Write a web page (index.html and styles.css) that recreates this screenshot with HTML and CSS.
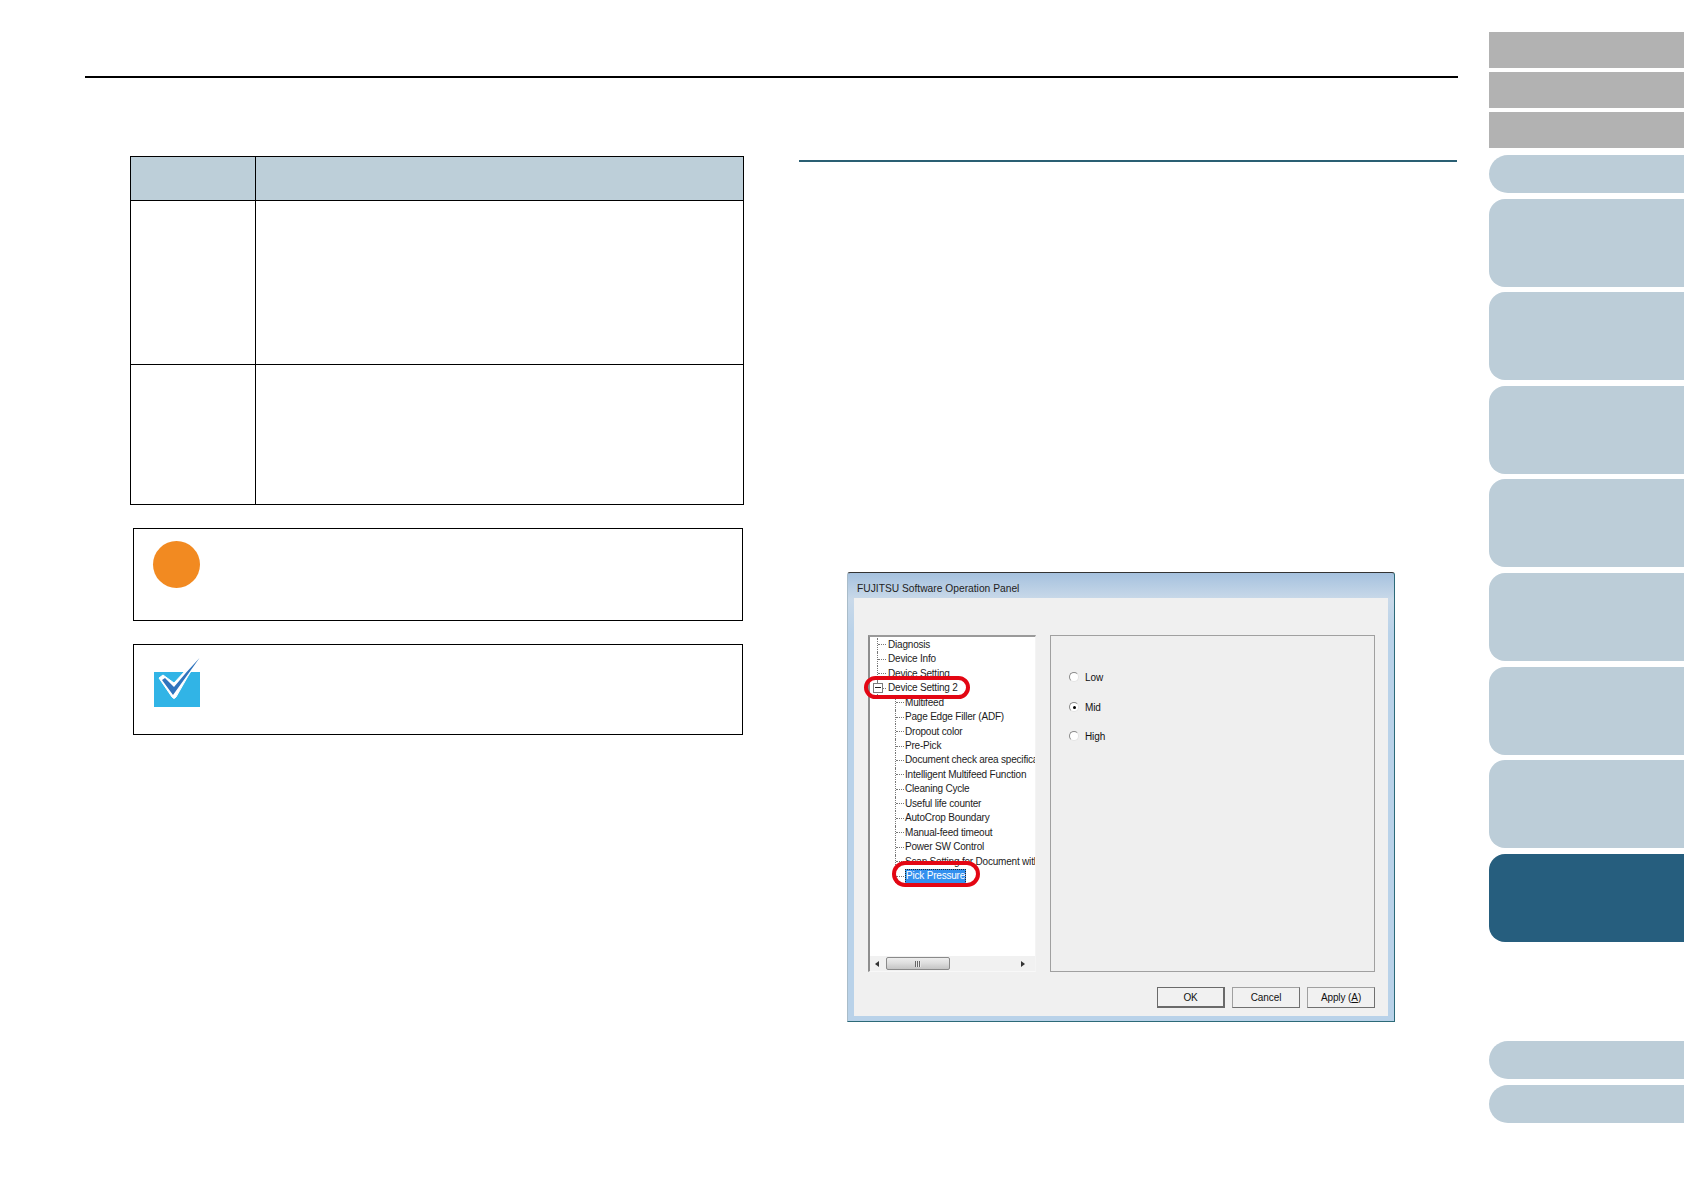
FILE: index.html
```html
<!DOCTYPE html>
<html lang="en">
<head>
<meta charset="utf-8">
<title>Pick Pressure</title>
<link rel="stylesheet" href="styles.css">
</head>
<body>
<div class="page">
  <main class="main">
    <div class="columns">
      <section class="left">
        <table class="spec">
          <thead><tr class="r-head"><th class="c1"></th><th></th></tr></thead>
          <tbody>
            <tr class="r-one"><td></td><td></td></tr>
            <tr class="r-two"><td></td><td></td></tr>
          </tbody>
        </table>
        <div class="note note-a"><span class="dot"></span></div>
        <div class="note note-b">
          <svg class="check" width="48" height="52" viewBox="0 0 48 52">
            <rect x="1" y="15" width="46" height="35" fill="#31b4e6"/>
            <path d="M6 21 L10 18 L21 26 Q33 12 47 0 Q35 18 23 40 Q21 43 19 40 Z" fill="#fff" stroke="#fff" stroke-width="1" stroke-linejoin="round"/>
            <path d="M9 23 L12 21 L21 30 Q34 14 46.500 1 Q33 20 20 38 Z" fill="#2f73bd"/>
          </svg>
        </div>
      </section>
      <section class="right">
        <div class="heading-line"></div>
        <div class="dialog">
          <div class="title">FUJITSU Software Operation Panel</div>
          <div class="client">
            <div class="panes">
              <div class="tree">
                <div class="row">Diagnosis</div>
                <div class="row">Device Info</div>
                <div class="row">Device Setting</div>
                <div class="row open"><span class="minus"></span>Device Setting 2</div>
                <div class="row child">Multifeed</div>
                <div class="row child">Page Edge Filler (ADF)</div>
                <div class="row child">Dropout color</div>
                <div class="row child">Pre-Pick</div>
                <div class="row child">Document check area specification</div>
                <div class="row child">Intelligent Multifeed Function</div>
                <div class="row child">Cleaning Cycle</div>
                <div class="row child">Useful life counter</div>
                <div class="row child">AutoCrop Boundary</div>
                <div class="row child">Manual-feed timeout</div>
                <div class="row child">Power SW Control</div>
                <div class="row child">Scan Setting for Document with Barcode</div>
                <div class="row child last"><span class="selected">Pick Pressure</span></div>
                <div class="scrollbar">
                  <span class="arrow arrow-l"></span>
                  <span class="thumb"><span class="grip"></span></span>
                  <span class="arrow arrow-r"></span>
                </div>
              </div>
              <div class="settings">
                <div class="radio-row r-low"><span class="radio"></span>Low</div>
                <div class="radio-row r-mid"><span class="radio on"></span>Mid</div>
                <div class="radio-row r-high"><span class="radio"></span>High</div>
              </div>
            </div>
            <div class="buttons">
              <span class="btn default">OK</span>
              <span class="btn">Cancel</span>
              <span class="btn"><span>Apply (<u>A</u>)</span></span>
            </div>
          </div>
          <span class="ring ring-a"></span>
          <span class="ring ring-b"></span>
        </div>
      </section>
    </div>
  </main>
  <nav class="side">
    <div class="group-gray">
      <span class="tab"></span><span class="tab"></span><span class="tab"></span>
    </div>
    <div class="group-blue">
      <span class="pill"></span>
      <span class="big"></span><span class="big"></span><span class="big"></span><span class="big"></span>
      <span class="big"></span><span class="big"></span><span class="big"></span>
      <span class="big current"></span>
    </div>
    <div class="group-bottom">
      <span class="pill"></span><span class="pill"></span>
    </div>
  </nav>
</div>
</body>
</html>
```
FILE: styles.css
```css
* { box-sizing: border-box; }
html, body { margin: 0; padding: 0; background: #fff; }
body { font-family: "Liberation Sans", Arial, sans-serif; }
.page { display: flex; width: 1684px; height: 1190px; overflow: hidden; }

.main { width: 1489px; padding: 76px 31px 0 85px; }
.columns {
  display: grid;
  grid-template-columns: 614px 658px;
  column-gap: 55px;
  padding-left: 45px;
  border-top: 2px solid #000;
}
.left { padding-top: 78px; }
.right { padding-top: 82px; }

.spec { width: 614px; border-collapse: collapse; table-layout: fixed; }
.spec th, .spec td { border: 1px solid #000; padding: 0; }
.spec th { background: #bdcfd9; }
.spec .c1 { width: 125px; }
.r-head { height: 44px; }
.r-one { height: 164px; }
.r-two { height: 140px; }

.note { border: 1px solid #000; margin: 23px 1px 0 3px; padding: 12px 0 0 19px; }
.note-a { height: 93px; }
.note-b { height: 91px; }
.dot { display: block; width: 47px; height: 47px; border-radius: 50%; background: #f28a21; }
.check { display: block; }

.heading-line { height: 2px; background: #2a5f73; }

.dialog {
  position: relative;
  width: 548px;
  height: 450px;
  margin: 410px 0 0 48px;
  padding: 0 6px 5px;
  display: flex;
  flex-direction: column;
  background: linear-gradient(180deg, #a5c1de 0, #c9d9e9 26px, #b9d2e9 60px, #b9d2e9 100%);
  border-top: 1px solid #333;
  border-bottom: 1px solid #2c6a78;
  border-left: 1px solid #a9bcc9;
  border-right: 1px solid #2c6a78;
  border-radius: 3px 3px 0 0;
}
.title {
  flex: none;
  height: 25px;
  padding: 10px 0 0 3px;
  font-size: 10.250px;
  line-height: 12px;
  color: #222;
  white-space: nowrap;
}
.client {
  flex: 1;
  padding: 37px 13px 8px 14px;
  background: #f0f0f0;
  display: flex;
  flex-direction: column;
}
.panes { flex: none; display: flex; gap: 14px; height: 337px; }

.tree {
  position: relative;
  width: 168px;
  padding-top: 0.500px;
  background: #fff;
  border-top: 2px solid #9a9a9a;
  border-left: 2px solid #8e8e8e;
  border-right: 1px solid #f4f4f4;
  border-bottom: 1px solid #f8f8f8;
  overflow: hidden;
  font-size: 10px;
  letter-spacing: -0.2px;
  color: #1c1c1c;
}
.row {
  display: flex;
  align-items: center;
  height: 14.470px;
  margin-left: 7px;
  border-left: 1px dotted #777;
  white-space: nowrap;
  line-height: 14px;
}
.row::before {
  content: "";
  flex: none;
  width: 8px;
  margin-right: 2px;
  border-top: 1px dotted #777;
}
.row.child { margin-left: 25px; }
.row.child::before { margin-right: 1px; }
.row.open { position: relative; }
.minus {
  position: absolute;
  left: -5px;
  top: 2px;
  width: 10px;
  height: 10px;
  background: #fff;
  border: 1px solid #7b7b7b;
}
.minus::after {
  content: "";
  position: absolute;
  left: 1px;
  right: 1px;
  top: 3px;
  border-top: 1px solid #222;
}
.selected {
  display: block;
  height: 15px;
  line-height: 14px;
  padding: 0 1px;
  background: #3390ee;
  color: #fff;
  outline: 1px dotted #222;
  outline-offset: -1px;
}

.scrollbar {
  position: absolute;
  left: 0;
  right: 0;
  bottom: 0;
  height: 15px;
  display: flex;
  align-items: center;
  background: #f1f1f1;
}
.arrow { flex: none; width: 0; height: 0; border-style: solid; border-color: transparent; }
.arrow-l { margin-left: 5px; border-width: 3.500px 4px 3.500px 0; border-right-color: #333; }
.arrow-r { margin-left: 64px; border-width: 3.500px 0 3.500px 4px; border-left-color: #333; }
.thumb {
  flex: none;
  display: flex;
  align-items: center;
  justify-content: center;
  width: 64px;
  height: 13px;
  margin-left: 7px;
  margin-right: 7px;
  background: linear-gradient(180deg, #eee 0, #dcdcdc 50%, #c4c4c4 100%);
  border: 1px solid #8a8a8a;
  border-radius: 2px;
}
.grip { width: 6px; height: 6px; background: repeating-linear-gradient(90deg, #666 0 1px, #e8e8e8 1px 2px); }

.settings {
  position: relative;
  width: 325px;
  padding: 33px 0 0 18px;
  border: 1px solid #a0a0a0;
  background: #efefef;
  font-size: 10px;
  letter-spacing: -0.1px;
  color: #111;
}
.radio-row { display: flex; align-items: center; gap: 5px; height: 16px; }
.r-mid { margin-top: 14px; }
.r-high { margin-top: 13px; }
.radio {
  position: relative;
  flex: none;
  width: 10px;
  height: 10px;
  border-radius: 50%;
  background: #fff;
  border: 1px solid #8a8a8a;
  border-right-color: #e4e4e4;
  border-bottom-color: #e4e4e4;
  margin-right: 1px;
}
.radio.on::after {
  content: "";
  position: absolute;
  left: 2.500px;
  top: 2.500px;
  width: 3px;
  height: 3px;
  border-radius: 50%;
  background: #000;
}

.buttons { display: flex; justify-content: flex-end; gap: 7px; margin-top: 15px; }
.btn {
  display: flex;
  align-items: center;
  justify-content: center;
  width: 68px;
  height: 21px;
  font-size: 10px;
  letter-spacing: -0.1px;
  color: #111;
  background: #f1f1f1;
  border: 1px solid #a0a0a0;
  border-right-color: #707070;
  border-bottom-color: #707070;
}
.btn.default { border: 2px solid #6a6a6a; border-top-width: 1px; border-left-width: 1px; }

.ring {
  position: absolute;
  border: 4px solid #e30613;
  border-radius: 12px;
}
.ring-a { left: 16px; top: 103px; width: 106px; height: 23px; }
.ring-b { left: 44px; top: 288px; width: 88px; height: 26px; border-radius: 13px; }

.side { width: 195px; padding-top: 32px; display: flex; flex-direction: column; }
.group-gray { display: flex; flex-direction: column; gap: 4px; }
.tab { display: block; height: 36px; background: #b2b2b2; }
.group-blue { display: flex; flex-direction: column; gap: 5.600px; margin-top: 7px; }
.pill { display: block; height: 38px; background: #bccdd8; border-radius: 19px 0 0 19px; }
.big { display: block; height: 88px; background: #bccdd8; border-radius: 16px 0 0 16px; }
.big.current { background: #265e7e; }
.group-bottom { display: flex; flex-direction: column; gap: 6px; margin-top: 99px; }
```
